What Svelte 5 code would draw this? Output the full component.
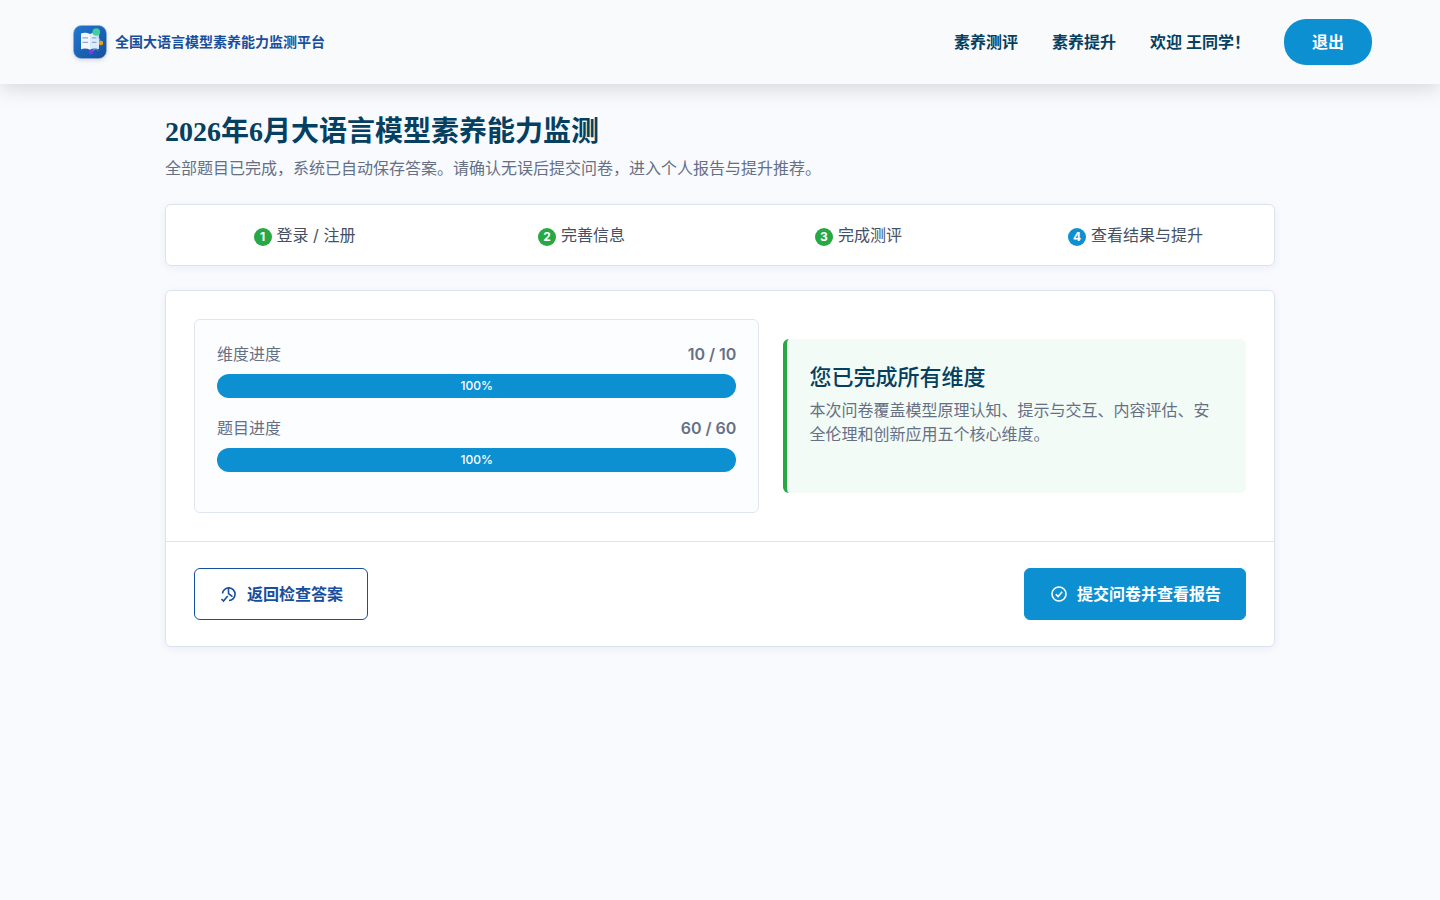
<script lang="ts">
	let user: string = $state('王同学');

	const navLinks = ['素养测评', '素养提升'];

	const steps = [
		{ label: '登录 / 注册', done: true },
		{ label: '完善信息', done: true },
		{ label: '完成测评', done: true },
		{ label: '查看结果与提升', done: false }
	];

	const progress = [
		{ label: '维度进度', current: 10, total: 10 },
		{ label: '题目进度', current: 60, total: 60 }
	];

	function percent(item: { current: number; total: number }) {
		return Math.round((item.current / item.total) * 100);
	}
</script>

<header class="site-header">
	<a class="brand" href="#home">
		<svg class="brand-logo" viewBox="0 0 44 44" aria-hidden="true">
			<defs>
				<linearGradient id="logo-bg" x1="0" y1="0" x2="1" y2="1">
					<stop offset="0" stop-color="#1f78d1" />
					<stop offset="1" stop-color="#174f9c" />
				</linearGradient>
			</defs>
			<rect x="5.5" y="5.5" width="33" height="33" rx="8" fill="url(#logo-bg)" stroke="#8eb4dc" stroke-width="0.6" />
			<path d="M13 13.500c3-1.200 6-1 9 .4v15.800c-3-1.300-6-1.500-9-.5z" fill="#f2f7fc" />
			<path d="M22 13.900c2.500-1.400 5.500-1.600 9-.4V29c-3.500-1-6.500-.8-9 .7z" fill="#dcebf9" />
			<path d="M14.500 17.800h5.500M14.500 22.300h5.500M24 17.800h4.500M24 22.300h4.500" stroke="#8fa9d0" stroke-width="1.300" />
			<path d="M29 14l4 9M24 31l4-2.500M28 28.500l2 2" stroke="#8bbdf0" stroke-width="0.800" fill="none" />
			<circle cx="28.300" cy="12" r="3.800" fill="#43cf9b" />
			<circle cx="33" cy="23" r="2.200" fill="#f59e0b" />
			<circle cx="23" cy="32" r="2.200" fill="#7c3aed" />
		</svg>
		<span>全国大语言模型素养能力监测平台</span>
	</a>
	<nav class="nav">
		{#each navLinks as link}
			<a class="nav-link" href="#{link}">{link}</a>
		{/each}
		<a class="nav-link" href="#profile">欢迎 {user}！</a>
		<button class="logout" type="button">退出</button>
	</nav>
</header>

<main class="page">
	<h1 class="title">2026年6月大语言模型素养能力监测</h1>
	<p class="subtitle">全部题目已完成，系统已自动保存答案。请确认无误后提交问卷，进入个人报告与提升推荐。</p>

	<ol class="steps card">
		{#each steps as step, i}
			<li class="step">
				<span class="step-num" class:done={step.done}>{i + 1}</span>{step.label}
			</li>
		{/each}
	</ol>

	<section class="card">
		<div class="summary">
			<div class="progress-box">
				{#each progress as item}
					<div class="progress-item">
						<div class="progress-head">
							<span>{item.label}</span>
							<strong>{item.current} / {item.total}</strong>
						</div>
						<div class="bar">
							<div class="bar-fill" style="width: {percent(item)}%">{percent(item)}%</div>
						</div>
					</div>
				{/each}
			</div>
			<div class="notice">
				<h2 class="notice-title">您已完成所有维度</h2>
				<p class="notice-text">
					本次问卷覆盖模型原理认知、提示与交互、内容评估、安全伦理和创新应用五个核心维度。
				</p>
			</div>
		</div>
		<div class="actions">
			<button class="btn btn-outline" type="button">
				<svg class="btn-icon" viewBox="0 0 18 18" aria-hidden="true">
					<path d="M3.500 8.500A6.300 6.300 0 1 1 10 15.500" />
					<path d="M9.500 3v5.500l4 3.200" />
					<path d="M2.500 14l2 2 4.200-5" />
				</svg>
				返回检查答案
			</button>
			<button class="btn btn-primary" type="button">
				<svg class="btn-icon" viewBox="0 0 18 18" aria-hidden="true">
					<circle cx="10" cy="9" r="7" />
					<path d="M6.800 9.200l2.300 2.300 4.100-4.700" />
				</svg>
				提交问卷并查看报告
			</button>
		</div>
	</section>
</main>

<style>
	:global(body) {
		background: #f8fafe;
		color: #445064;
		font-family: Inter, 'Noto Sans CJK SC', sans-serif;
		font-size: 16px;
		line-height: 24px;
	}

	.site-header {
		position: relative;
		display: flex;
		justify-content: space-between;
		align-items: center;
		padding: 19px 68px;
		background: #f9fafc;
		box-shadow: 0 4px 20px rgba(0, 0, 0, 0.15);
	}

	.brand {
		display: flex;
		align-items: center;
		gap: 3px;
		color: #174f9c;
		font-size: 14px;
		font-weight: 600;
		text-decoration: none;
	}

	.brand-logo {
		width: 44px;
		height: 44px;
		filter: drop-shadow(0 2px 2px rgba(30, 60, 110, 0.15));
	}

	.nav {
		display: flex;
		align-items: center;
		gap: 34px;
	}

	.nav-link {
		color: #064060;
		font-weight: 600;
		text-decoration: none;
	}

	.logout {
		padding: 11px 28px;
		border: none;
		border-radius: 22px;
		background: #0d90d2;
		color: #fff;
		font: inherit;
		font-weight: 700;
		cursor: pointer;
	}

	.page {
		box-sizing: border-box;
		max-width: 1140px;
		margin: 0 auto;
		padding: 30px 15px;
	}

	.title {
		margin: 0 0 6px;
		color: #064060;
		font-family: 'Liberation Serif', STKaiti, KaiTi, 'Noto Sans CJK SC', serif;
		font-size: 28px;
		font-weight: 700;
		line-height: 36px;
	}

	.subtitle {
		margin: 0 0 24px;
		color: #667085;
	}

	.card {
		border: 1px solid #dbe4ee;
		border-radius: 6px;
		background: #fff;
		box-shadow: 0 2px 8px rgba(20, 40, 80, 0.06);
	}

	.steps {
		display: grid;
		grid-template-columns: repeat(4, 1fr);
		margin: 0 0 24px;
		padding: 18px 0;
		list-style: none;
	}

	.step {
		text-align: center;
	}

	.step-num {
		display: inline-block;
		width: 18px;
		margin-right: 5px;
		border-radius: 50%;
		background: #0d90d2;
		color: #fff;
		font-size: 12px;
		font-weight: 700;
		line-height: 18px;
		vertical-align: middle;
	}

	.step-num.done {
		background: #28a745;
	}

	.summary {
		display: grid;
		grid-template-columns: 11fr 9fr;
		align-items: center;
		gap: 24px;
		padding: 28px;
	}

	.progress-box {
		padding: 22px 22px 40px;
		border: 1px solid #e0e6f0;
		border-radius: 6px;
		background: #fcfdff;
		color: #667085;
	}

	.progress-item + .progress-item {
		margin-top: 18px;
	}

	.progress-head {
		display: flex;
		justify-content: space-between;
		margin-bottom: 8px;
	}

	.progress-head strong {
		font-weight: 600;
	}

	.bar {
		overflow: hidden;
		border-radius: 12px;
		background: #e9ecef;
	}

	.bar-fill {
		background: #0d90d2;
		color: #fff;
		font-size: 12px;
		font-weight: 500;
		text-align: center;
	}

	.notice {
		padding: 22px 22px 47px;
		border-left: 4px solid #28a745;
		border-radius: 6px;
		background: #f2fbf6;
	}

	.notice-title {
		margin: 0 0 8px;
		color: #064060;
		font-family: STKaiti, KaiTi, 'Noto Sans CJK SC', serif;
		font-size: 22px;
		font-weight: 500;
		line-height: 29px;
	}

	.notice-text {
		margin: 0;
		color: #667085;
	}

	.actions {
		display: flex;
		justify-content: space-between;
		padding: 26px 28px;
		border-top: 1px solid #dbe4ee;
	}

	.btn {
		display: flex;
		align-items: center;
		gap: 10px;
		padding: 13px 24px;
		border: 1px solid #174f9c;
		border-radius: 6px;
		background: #fff;
		color: #174f9c;
		font: inherit;
		font-weight: 600;
		cursor: pointer;
	}

	.btn-primary {
		border-color: #0d90d2;
		background: #0d90d2;
		color: #fff;
		font-weight: 700;
	}

	.btn-icon {
		width: 18px;
		height: 18px;
		fill: none;
		stroke: currentColor;
		stroke-width: 1.6;
	}
</style>
